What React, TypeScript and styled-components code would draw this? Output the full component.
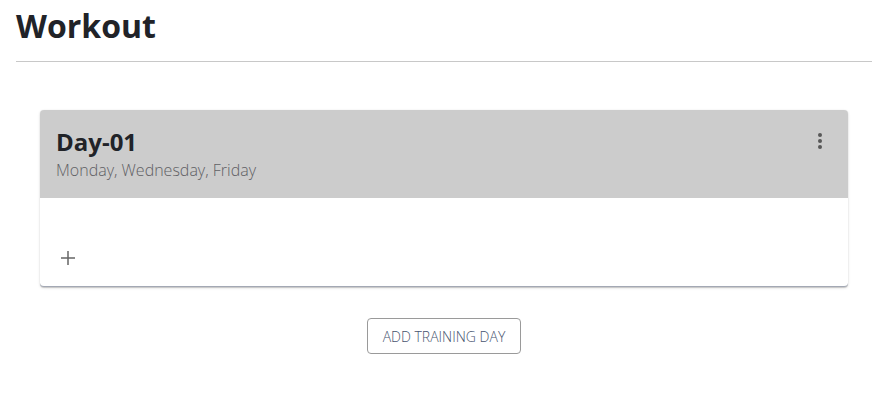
import * as React from "react";
import styled, { createGlobalStyle } from "styled-components";

const GlobalStyle = createGlobalStyle`
  * { box-sizing: border-box; }
  body {
    margin: 0;
    background: #ffffff;
    font-family: "Open Sans", "Noto Sans", sans-serif;
    color: #212328;
  }
`;

const Page = styled.main`
  padding: 0 1px 0 16px;
`;

const Title = styled.h1`
  margin: 0;
  padding-top: 4px;
  height: 62px;
  font-size: 32px;
  font-weight: 700;
  line-height: 44px;
  border-bottom: 1px solid #c8c8c8;
`;

const Content = styled.section`
  padding: 48px 24px 0;
  display: flex;
  flex-direction: column;
  align-items: center;
`;

const Card = styled.article`
  width: 100%;
  border-radius: 4px;
  overflow: hidden;
  background: #fff;
  box-shadow: 0 1px 1px rgba(0, 0, 0, 0.14), 0 1px 3px rgba(0, 0, 0, 0.12),
    0 0 1px rgba(0, 0, 0, 0.1);
  border-bottom: 1px solid #a3a8b4;
`;

const CardHeader = styled.header`
  height: 88px;
  background: #cccccc;
  padding: 16px 16px 0;
  display: flex;
  justify-content: space-between;
  align-items: flex-start;
`;

const DayTitle = styled.h2`
  margin: 0;
  font-size: 24px;
  font-weight: 700;
  line-height: 32px;
  color: #212328;
`;

const DayList = styled.p`
  margin: 0;
  font-size: 16px;
  font-weight: 300;
  line-height: 24px;
  color: #5f6064;
`;

const IconButton = styled.button<{ $offset?: number }>`
  width: 24px;
  height: 24px;
  margin-top: ${({ $offset }) => $offset ?? 0}px;
  padding: 0;
  border: 0;
  background: transparent;
  color: #585858;
  display: flex;
  align-items: center;
  justify-content: center;
`;

const CardBody = styled.div`
  height: 88px;
  padding: 48px 0 0 16px;
`;

const AddButton = styled(IconButton)`
  color: #666;
`;

const OutlineButton = styled.button`
  margin-top: 31px;
  height: 36px;
  padding: 0 15px;
  border: 1px solid #9a9a9a;
  border-radius: 4px;
  background: #fff;
  font-family: "Open Sans", "Noto Sans", sans-serif;
  font-size: 14px;
  font-weight: 300;
  color: #46536e;
  text-transform: uppercase;
`;

const MoreIcon = () => (
  <svg width="24" height="24" viewBox="0 0 24 24" fill="currentColor">
    <circle cx="12" cy="6" r="2" />
    <circle cx="12" cy="12" r="2" />
    <circle cx="12" cy="18" r="2" />
  </svg>
);

const PlusIcon = () => (
  <svg width="24" height="24" viewBox="0 0 24 24" fill="none" stroke="currentColor" strokeWidth="1.5">
    <path d="M12 5v14M5 12h14" />
  </svg>
);

export default function App() {
  return (
    <>
      <GlobalStyle />
      <Page>
        <Title>Workout</Title>
        <Content>
          <Card>
            <CardHeader>
              <div>
                <DayTitle>Day-01</DayTitle>
                <DayList>Monday, Wednesday, Friday</DayList>
              </div>
              <IconButton aria-label="more" $offset={3}>
                <MoreIcon />
              </IconButton>
            </CardHeader>
            <CardBody>
              <AddButton aria-label="add exercise">
                <PlusIcon />
              </AddButton>
            </CardBody>
          </Card>
          <OutlineButton>Add training day</OutlineButton>
        </Content>
      </Page>
    </>
  );
}
